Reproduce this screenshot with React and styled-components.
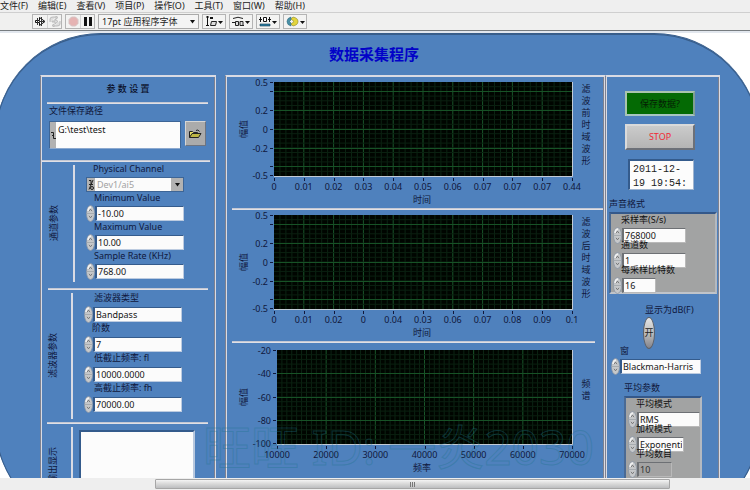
import React, { useId } from "react";
import styled, { createGlobalStyle, css } from "styled-components";

const LIGHT = "#d9dbe4";
const DARK = "#7d8190";
const INK = "#10183c";

const GlobalStyle = createGlobalStyle`
  *, *::before, *::after { box-sizing: border-box; }
  body { margin: 0; background: #fff; }
  body, button, input, select, textarea {
    font-family: "Noto Sans", "Noto Sans CJK SC", sans-serif;
    font-size: 9px;
    color: ${INK};
  }
`;

const Window = styled.div`
  display: flex;
  flex-direction: column;
  height: 100vh;
  overflow: hidden;
`;

const MenuBar = styled.nav`
  display: flex;
  gap: 10px;
  height: 13px;
  flex: none;
  background: #efefef;
  border-bottom: 1px solid #cfcfcf;
`;

const MenuItem = styled.button`
  height: 12px;
  padding: 0;
  border: 0;
  background: none;
  color: #222;
  line-height: 12px;
  white-space: nowrap;
`;

const Toolbar = styled.div`
  display: flex;
  align-items: center;
  gap: 3px;
  height: 18px;
  flex: none;
  padding-left: 32px;
  background: #f0f0ef;
  border-bottom: 1px solid #777c80;
`;

const ToolGroup = styled.div`
  display: flex;
  height: 15px;
  border: 1px solid #b4b4b4;
`;

const ToolButton = styled.button`
  display: flex;
  align-items: center;
  justify-content: center;
  width: ${(p) => (p.$wide ? 22 : 14)}px;
  padding: 0;
  border: 0;
  background: #f3f3f2;
  & + & { border-left: 1px solid #d4d4d4; }
`;

const FontSelect = styled.div`
  display: flex;
  align-items: center;
  width: 101px;
  height: 15px;
  border: 1px solid #aaa;
  background: #f4f4f4;
  select {
    appearance: none;
    flex: 1;
    min-width: 0;
    height: 13px;
    padding: 0 3px;
    border: 0;
    background: none;
    color: #222;
    line-height: 13px;
  }
  svg { margin-right: 3px; pointer-events: none; }
`;

const Canvas = styled.main`
  flex: 1;
  min-height: 0;
  overflow: hidden;
  padding-top: 2px;
  background: linear-gradient(#e2e7ee 2px, #fff 2px);
`;

const FrontPanel = styled.div`
  position: relative;
  min-height: 494px;
  margin: 0 -10px 0 -5px;
  padding: 0 40px 0 45px;
  background: #4f81bd;
  border-top: 1px solid #385d8a;
  box-shadow: inset 0 0 0 1px #385d8a;
  border-radius: 106px;
`;

const PanelTitle = styled.h1`
  margin: 0 0 0 -12px;
  height: 41px;
  color: #0202c8;
  font-size: 15px;
  font-weight: 700;
  line-height: 40px;
  text-align: center;
`;

const Columns = styled.div`
  display: grid;
  grid-template-columns: 176px minmax(0, 1fr) 115px;
`;

const Frame = styled.section`
  min-width: 0;
  height: 454px;
  margin-left: ${(p) => p.$gap || 0}px;
  border: 1px solid;
  border-color: ${LIGHT} ${LIGHT} ${DARK} ${DARK};
  border-bottom: 0;
  box-shadow: inset 1px 1px 0 ${LIGHT}, inset -1px 0 0 ${DARK};
`;

const Divider = styled.hr`
  height: 2px;
  margin: 0 ${(p) => p.$right || 7}px 0 ${(p) => p.$left || 6}px;
  border: 0;
  border-top: 1px solid #c4c8d4;
  border-bottom: 1px solid #e0e0e6;
`;

const Heading = styled.h2`
  margin: 0;
  height: 26px;
  color: #0a0f28;
  font-size: 9px;
  font-weight: 500;
  line-height: 26px;
  text-align: center;
`;

const PathBlock = styled.div`
  height: 56px;
  padding: 0 9px 0 8px;
`;

const Caption = styled.label`
  display: block;
  height: ${(p) => p.$height || 14}px;
  padding-left: ${(p) => p.$indent || 0}px;
  line-height: 12px;
  white-space: nowrap;
`;

const PathCaption = styled(Caption)`
  padding-top: 1px;
`;

const PathRow = styled.div`
  display: flex;
  gap: 4px;
  margin-top: 2px;
`;

const PathBox = styled.div`
  display: flex;
  flex: 1;
  min-width: 0;
  height: 28px;
  border: 1px solid #3d6596;
  border-bottom-color: #8ca9cf;
  background: #aeb0b2;
  textarea {
    flex: 1;
    min-width: 0;
    padding: 1px 2px;
    border: 0;
    resize: none;
    overflow: hidden;
    background: #fcfcfc;
    color: #111;
    line-height: 13px;
  }
`;

const BrowseButton = styled.button`
  display: flex;
  align-items: center;
  justify-content: center;
  width: 21px;
  height: 25px;
  padding: 0;
  border: 1px solid;
  border-color: #d6d6d6 #6e7480 #6e7480 #d6d6d6;
  background: #ababab;
`;

const Group = styled.div`
  display: grid;
  grid-template-columns: ${(p) => p.$rule}px minmax(0, 1fr);
  height: ${(p) => p.$height}px;
`;

const Side = styled.div`
  display: flex;
  align-items: ${(p) => (p.$start ? "flex-start" : "center")};
  justify-content: center;
  margin: 3px 0 ${(p) => p.$bottom || 4}px;
  padding: ${(p) => p.$top || 0}px 6px 0 0;
  border-right: 2px solid ${LIGHT};
  span {
    writing-mode: vertical-rl;
    text-orientation: sideways;
    transform: rotate(180deg);
    line-height: 12px;
    white-space: nowrap;
  }
`;

const Fields = styled.div`
  padding: ${(p) => p.$top || 0}px 0 0 11px;
`;

const Control = styled.div`
  width: 98px;
`;

const ControlRow = styled.div`
  display: flex;
  align-items: center;
  height: 15px;
`;

const Knob = styled.button`
  flex: none;
  width: 9px;
  height: 17px;
  padding: 0;
  border: 0;
  background: none;
  svg { display: block; }
`;

const TextInput = styled.input`
  flex: 1;
  min-width: 0;
  height: 15px;
  padding: 0 1px;
  border: 1px solid #bccbe0;
  border-top-color: #345b8c;
  border-left: 2px solid #345b8c;
  background: #fbfbfb;
  color: #161616;
  line-height: 13px;
  ${(p) =>
    p.$grey &&
    css`
      border-color: #6d7074 #b9b9b9 #b9b9b9 #6d7074;
    `}
  &:disabled { background: #a3a3a3; color: #333; }
`;

const ChannelBox = styled.div`
  display: flex;
  width: 98px;
  height: 15px;
  border: 1px solid #3d6596;
  background: #fbfbfb;
  select {
    appearance: none;
    flex: 1;
    min-width: 0;
    height: 13px;
    padding: 0 2px;
    border: 0;
    background: none;
    color: #a2a2a2;
    opacity: 1;
    line-height: 13px;
  }
`;

const Glyph = styled.span`
  display: flex;
  align-items: center;
  justify-content: center;
  width: ${(p) => p.$width || 8}px;
  background: #b2b2b2;
`;

const Output = styled.textarea`
  display: block;
  width: 116px;
  height: 80px;
  margin: 6px 0 0 6px;
  border: 2px solid #345b8c;
  border-right-color: #b8c8de;
  background: #fcfcfc;
  resize: none;
`;

const Right = styled.div`
  display: flex;
  flex-direction: column;
  padding: 15px 0 0 3px;
`;

const ActionButton = styled.button`
  width: 70px;
  height: ${(p) => (p.$save ? 25 : 26)}px;
  margin: 0 0 ${(p) => (p.$save ? 8 : 9)}px 16px;
  padding: 0;
  border: 2px solid;
  border-color: ${(p) => (p.$save ? "#a9c4ad #7f9f93 #a8c5c0 #a9c4ad" : "#dadada #6c7078 #6c7078 #dadada")};
  background: ${(p) => (p.$save ? "#046a04" : "linear-gradient(#cbcbcb, #b4b4b4)")};
  color: ${(p) => (p.$save ? "#052005" : "#f02a35")};
  line-height: 20px;
`;

const DateBox = styled.textarea`
  width: 66px;
  height: 31px;
  margin-left: 19px;
  padding: 2px 0 0 3px;
  border: 1px solid #9fb4cf;
  border-top: 2px solid #345b8c;
  border-left: 2px solid #345b8c;
  background: #fcfcfc;
  color: #222;
  font-family: "Liberation Mono", monospace;
  font-size: 10px;
  line-height: 14px;
  resize: none;
  overflow: hidden;
`;

const SectionLabel = styled.span`
  height: 16px;
  margin-top: ${(p) => p.$top}px;
  padding-left: ${(p) => p.$indent || 0}px;
  line-height: 15px;
  white-space: nowrap;
`;

const Cluster = styled.fieldset`
  min-width: 0;
  height: ${(p) => p.$height}px;
  width: ${(p) => p.$width}px;
  margin: 0 0 0 ${(p) => p.$left || 0}px;
  padding: 0 0 0 2px;
  border: 2px solid;
  border-color: #34588a #b4b9c0 #c0c4ca #4a6a94;
  background: #a2a3a3;
`;

const ClusterItem = styled.div`
  width: ${(p) => p.$width}px;
  height: 25px;
  label {
    position: relative;
    display: block;
    height: 14px;
    padding-left: 8px;
    color: #111;
    line-height: 12px;
    white-space: nowrap;
  }
`;

const ToggleCaption = styled.label`
  height: 15px;
  margin-top: 8px;
  padding-left: 36px;
  line-height: 15px;
  white-space: nowrap;
`;

const DbToggle = styled.button`
  width: 12px;
  height: 32px;
  margin: 0 0 0 34px;
  padding: 0;
  border: 1px solid #5d6068;
  border-radius: 50%;
  background: linear-gradient(#e6e6e6, #b8b8b8 55%, #84848c);
  color: #222;
  line-height: 28px;
`;

const WindowRow = styled.div`
  width: 92px;
  margin-top: -4px;
  padding-left: 2px;
`;

const Plot = styled.svg`
  display: block;
  width: 100%;
  height: auto;
  text { font-size: 9px; fill: ${INK}; }
`;

const Watermark = styled.div`
  position: absolute;
  left: 208px;
  top: 380px;
  display: flex;
  color: transparent;
  font-size: 48px;
  line-height: 66px;
  white-space: pre;
  pointer-events: none;
  -webkit-text-stroke: 1px rgba(30, 115, 140, 0.36);
`;

const ScrollTrack = styled.div`
  flex: none;
  display: grid;
  grid-template-columns: 155fr 515fr 80fr;
  height: 12px;
  padding: 1px 0;
  background: #eeeeee;
`;

const ScrollThumb = styled.div`
  grid-column: 2;
  display: flex;
  align-items: center;
  justify-content: center;
  border: 1px solid #a6a6a6;
  border-radius: 1px;
  background: linear-gradient(#f4f4f4, #dadada 45%, #bdbec0);
`;

const Caret = ({ size = 5 }) => (
  <svg width={size} height="4" viewBox="0 0 5 4" aria-hidden="true">
    <path d="M0 0h5L2.500 3.500z" fill="#111" />
  </svg>
);

const KnobArt = () => (
  <svg width="9" height="17" viewBox="0 0 9 17" aria-hidden="true">
    <ellipse cx="4.500" cy="8.500" rx="4" ry="8" fill="#c6c8ca" stroke="#8793a3" strokeWidth=".7" />
    <path d="M2 6Q2 2.500 5 2" stroke="#f2f2f2" strokeWidth="1.500" fill="none" />
    <path d="M.5 8.500h8" stroke="#a0a4a9" strokeWidth=".8" />
    <path d="M3 6.200l1.500-2 1.500 2M3 10.800l1.500 2 1.500-2" stroke="#666" fill="none" strokeWidth=".8" />
  </svg>
);

function SpinInput({ id, label, ...rest }) {
  return (
    <ControlRow>
      <Knob aria-label={`${label} ±`}><KnobArt /></Knob>
      <TextInput id={id} {...rest} />
    </ControlRow>
  );
}

function Field({ label, value, captionHeight = 14, indent = 8 }) {
  const id = useId();
  return (
    <Control>
      <Caption htmlFor={id} $height={captionHeight} $indent={indent}>{label}</Caption>
      <SpinInput id={id} label={label} defaultValue={value} />
    </Control>
  );
}

function ClusterField({ label, value, width, disabled }) {
  const id = useId();
  return (
    <ClusterItem $width={width}>
      <label htmlFor={id}>{label}</label>
      <SpinInput id={id} label={label} defaultValue={value} disabled={disabled} $grey />
    </ClusterItem>
  );
}

function Chart({ height, left, top, yTicks, xTicks, yRows, xLabel, side, sideTop, minorX, minorY }) {
  const right = 346;
  const bottom = top + 94;
  const w = right - left;
  const step = w / (xTicks.length - 1);
  const lines = [];
  for (let i = 1; i < (xTicks.length - 1) * minorX; i++) {
    const x = left + (i * step) / minorX;
    lines.push(<path key={`x${i}`} d={`M${x} ${top}V${bottom}`} stroke={i % minorX ? "#0b2413" : "#19562a"} />);
  }
  for (let i = 1; i * minorY < 94; i++) {
    const y = top + i * minorY;
    lines.push(<path key={`y${i}`} d={`M${left} ${y}H${right}`} stroke="#0a2010" />);
  }
  return (
    <Plot viewBox={`0 0 378 ${height}`} role="img" aria-label={side}>
      <rect x={left} y={top} width={w} height="94" fill="#000500" />
      {lines}
      {yRows.map((y) => (
        <path key={y} d={`M${left} ${top + y + 0.5}H${right}`} stroke="#175226" />
      ))}
      <path d={`M${left} ${bottom + 0.5}H${right + 0.5}V${top}`} stroke="#c3cbd6" fill="none" />
      {yTicks.map(([text, y]) => (
        <g key={y}>
          <path d={`M${left - 4} ${top + y + 0.5}h3`} stroke={INK} />
          <text x={left - 6} y={top + y + 4} textAnchor="end">{text}</text>
        </g>
      ))}
      {xTicks.map((text, i) => (
        <g key={i}>
          <path d={`M${Math.round(left + i * step) + 0.5} ${bottom + 2}v3`} stroke={INK} />
          <text x={left + i * step} y={bottom + 14} textAnchor="middle">{text}</text>
        </g>
      ))}
      <text x={196} y={bottom + 27} textAnchor="middle">{xLabel}</text>
      <text transform={`translate(21 ${top + 47}) rotate(-90)`} textAnchor="middle">幅值</text>
      {[...side].map((c, i) => (
        <text key={i} x="360" y={sideTop + i * 12} textAnchor="middle">{c}</text>
      ))}
    </Plot>
  );
}

const amplitude = [["0.5", 0], ["", 9], ["0.2", 28], ["0", 47], ["-0.2", 66], ["", 84], ["-0.5", 93]];

const menus = ["文件(F)", "编辑(E)", "查看(V)", "项目(P)", "操作(O)", "工具(T)", "窗口(W)", "帮助(H)"];

export default function App() {
  const windowId = useId();
  return (
    <>
      <GlobalStyle />
      <Window>
        <MenuBar>
          {menus.map((m) => (
            <MenuItem key={m}>{m}</MenuItem>
          ))}
        </MenuBar>
        <Toolbar>
          <ToolGroup>
            <ToolButton aria-label="运行">
              <svg width="11" height="11" viewBox="0 0 11 11">
                <path d="M0.500 4.500h4V1.500l5.500 4-5.500 4v-3h-4z" fill="#fff" stroke="#111" />
                <path d="M2.500 2v7M6.500 1v9M4 5.500h5" stroke="#333" />
              </svg>
            </ToolButton>
            <ToolButton aria-label="连续运行">
              <svg width="12" height="11" viewBox="0 0 12 11">
                <path d="M1 6V3q0-2 3-2h3M11 5v3q0 2-3 2H5M7 0v3l2-1.500zM5 8v3L3 9.500zM3 5h3V3l3 2.500L6 8V6H3z" fill="#ddd" stroke="#bcbcbc" />
              </svg>
            </ToolButton>
          </ToolGroup>
          <ToolGroup>
            <ToolButton aria-label="中止">
              <svg width="11" height="11" viewBox="0 0 11 11">
                <path d="M3.500 1h4L10 3.500v4L7.500 10h-4L1 7.500v-4z" fill="#e5b3b3" stroke="#d6c4c4" />
              </svg>
            </ToolButton>
            <ToolButton aria-label="暂停">
              <svg width="8" height="9" viewBox="0 0 8 9"><path d="M0 0h3v9H0zM5 0h3v9H5z" fill="#111" /></svg>
            </ToolButton>
          </ToolGroup>
          <FontSelect>
            <select aria-label="字体"><option>17pt 应用程序字体</option></select>
            <Caret size={5} />
          </FontSelect>
          <ToolGroup>
            <ToolButton $wide aria-label="对齐">
              <svg width="19" height="11" viewBox="0 0 19 11">
                <path d="M2.500 0v10M1 1h3M1 9.500h3" stroke="#111" fill="none" />
                <path d="M5 1h3v2H5z" fill="#111" />
                <path d="M6.500 5.500h5l-1 4h-5z" fill="#ddd" stroke="#222" />
                <path d="M13 5h5l-2.500 3z" fill="#111" />
              </svg>
            </ToolButton>
          </ToolGroup>
          <ToolGroup>
            <ToolButton $wide aria-label="分布">
              <svg width="19" height="11" viewBox="0 0 19 11">
                <path d="M1 2.500Q6 0 11 2.500M0 6.500h3M10 9.500h2" stroke="#222" fill="none" />
                <path d="M3.500 5.500h3v4h-3zM8 5.500h3v4H8z" fill="#ddd" stroke="#222" />
                <path d="M13 5h5l-2.500 3z" fill="#111" />
              </svg>
            </ToolButton>
          </ToolGroup>
          <ToolGroup>
            <ToolButton $wide aria-label="调整大小">
              <svg width="19" height="11" viewBox="0 0 19 11">
                <path d="M0 3.500h3M9 3.500h3M1.500 1v5M10.500 1v5" stroke="#111" />
                <path d="M4.500 1.500h3v4h-3z" fill="#fff" stroke="#111" />
                <path d="M1 8h10v2H1z" fill="#2d7fa4" stroke="#173d52" strokeWidth=".6" />
                <path d="M13 5h5l-2.500 3z" fill="#111" />
              </svg>
            </ToolButton>
          </ToolGroup>
          <ToolGroup>
            <ToolButton $wide aria-label="重新排序">
              <svg width="19" height="11" viewBox="0 0 19 11">
                <path d="M5 1Q1 2 1 5.500T5 10V7L3.500 5.500 5 4z" fill="#4a91a8" stroke="#2d6b80" strokeWidth=".6" />
                <path d="M5 3l2-2q5 1 5 4.500T7 10l-2-2 3-2.500z" fill="#e2d53c" stroke="#8c8420" strokeWidth=".6" />
                <path d="M14 5h5l-2.500 3z" fill="#111" />
              </svg>
            </ToolButton>
          </ToolGroup>
        </Toolbar>

        <Canvas>
          <FrontPanel>
            <PanelTitle>数据采集程序</PanelTitle>
            <Columns>
              <Frame>
                <Heading>参 数 设 置</Heading>
                <Divider $left={6} $right={7} />
                <PathBlock>
                  <PathCaption htmlFor="path" $height={15}>文件保存路径</PathCaption>
                  <PathRow>
                    <PathBox>
                      <Glyph $width={6}>
                        <svg width="5" height="9" viewBox="0 0 5 9"><path d="M0 1.500h2.500v6H5M1 4.500h2" stroke="#222" fill="none" /></svg>
                      </Glyph>
                      <textarea id="path" defaultValue={"G:\\test\\test"} />
                    </PathBox>
                    <BrowseButton aria-label="浏览">
                      <svg width="13" height="10" viewBox="0 0 13 10">
                        <path d="M.5 8.500v-6h3l1 1h4v2" fill="#e8e06a" stroke="#222" />
                        <path d="M.5 8.500l2.500-4h9l-2.500 4z" fill="#bdb544" stroke="#222" />
                        <path d="M7 1.500q2-1.500 3.500 1" stroke="#222" fill="none" />
                      </svg>
                    </BrowseButton>
                  </PathRow>
                </PathBlock>
                <Divider $left={1} $right={5} />
                <Group $rule={34} $height={126}>
                  <Side $bottom={6}><span>通道参数</span></Side>
                  <Fields $top={1}>
                    <Caption htmlFor="channel" $indent={7}>Physical Channel</Caption>
                    <ChannelBox>
                      <Glyph>
                        <svg width="6" height="12" viewBox="0 0 6 12">
                          <path d="M1 1.500h2v4M1 5.500h4M1 10.500L5 1" stroke="#222" fill="none" />
                          <circle cx="4" cy="9" r="1.500" stroke="#222" fill="none" />
                        </svg>
                      </Glyph>
                      <select id="channel" disabled><option>Dev1/ai5</option></select>
                      <Glyph $width={12}><Caret size={7} /></Glyph>
                    </ChannelBox>
                    <Field label="Minimum Value" value="-10.00" />
                    <Field label="Maximum Value" value="10.00" />
                    <Field label="Sample Rate (KHz)" value="768.00" />
                  </Fields>
                </Group>
                <Divider $left={7} $right={7} />
                <Group $rule={32} $height={132}>
                  <Side $bottom={3}><span>滤波器参数</span></Side>
                  <Fields $top={2}>
                    <Field label="滤波器类型" value="Bandpass" captionHeight={15} indent={10} />
                    <Field label="阶数" value="7" captionHeight={15} />
                    <Field label="低截止频率: fl" value="10000.0000" captionHeight={15} indent={10} />
                    <Field label="高截止频率: fh" value="70000.00" captionHeight={15} indent={10} />
                  </Fields>
                </Group>
                <Divider $left={6} $right={7} />
                <Group $rule={32} $height={100}>
                  <Side $start $top={20}><span>错误输出显示</span></Side>
                  <Output aria-label="错误输出" readOnly />
                </Group>
              </Frame>

              <Frame $gap={9}>
                <Chart height={132} left={48} top={6} xLabel="时间" side="滤波前时域波形" sideTop={16}
                  yTicks={amplitude} yRows={[9, 28, 47, 66, 84]} minorX={5} minorY={4.7}
                  xTicks={["0", "0.01", "0.02", "0.03", "0.04", "0.05", "0.06", "0.07", "0.07", "0.07", "0.44"]} />
                <Divider $left={6} $right={1} />
                <Chart height={131} left={48} top={5} xLabel="时间" side="滤波后时域波形" sideTop={15}
                  yTicks={amplitude} yRows={[9, 28, 47, 66, 84]} minorX={5} minorY={4.7}
                  xTicks={["0", "0.01", "0.02", "0", "0.04", "0.03", "0.06", "0.07", "0.08", "0.09", "0.1"]} />
                <Divider $left={6} $right={9} />
                <Chart height={136} left={51} top={7} xLabel="频率" side="频谱" sideTop={44}
                  yTicks={[["-20", 0], ["-40", 23], ["-60", 47], ["-80", 70], ["-100", 93]]}
                  yRows={[23, 47, 70]} minorX={10} minorY={4.7}
                  xTicks={["10000", "20000", "30000", "40000", "50000", "60000", "70000"]} />
              </Frame>

              <Frame>
                <Right>
                  <ActionButton $save>保存数据?</ActionButton>
                  <ActionButton>STOP</ActionButton>
                  <DateBox aria-label="日期时间" readOnly defaultValue={"2011-12-\n19 19:54:"} />
                  <SectionLabel $top={6}>声音格式</SectionLabel>
                  <Cluster $width={108} $height={82} aria-label="声音格式">
                    <ClusterField label="采样率(S/s)" value="768000" width={73} />
                    <ClusterField label="通道数" value="1" width={73} />
                    <ClusterField label="每采样比特数" value="16" width={43} />
                  </Cluster>
                  <ToggleCaption htmlFor="db">显示为dB(F)</ToggleCaption>
                  <DbToggle id="db">开</DbToggle>
                  <WindowRow>
                    <Caption htmlFor={windowId} $indent={9}>窗</Caption>
                    <SpinInput id={windowId} label="窗" defaultValue="Blackman-Harris" />
                  </WindowRow>
                  <SectionLabel $top={6} $indent={15}>平均参数</SectionLabel>
                  <Cluster $width={78} $height={110} $left={15} aria-label="平均参数">
                    <ClusterField label="平均模式" value="RMS" width={72} />
                    <ClusterField label="加权模式" value="Exponenti" width={56} />
                    <ClusterField label="平均数目" value="10" width={44} disabled />
                  </Cluster>
                </Right>
              </Frame>
            </Columns>
            <Watermark aria-hidden="true">旺旺 ID: 一炎2030</Watermark>
          </FrontPanel>
        </Canvas>

        <ScrollTrack>
          <ScrollThumb>
            <svg width="6" height="5" viewBox="0 0 6 5"><path d="M.5 0v5M2.500 0v5M4.500 0v5" stroke="#777" /></svg>
          </ScrollThumb>
        </ScrollTrack>
      </Window>
    </>
  );
}
